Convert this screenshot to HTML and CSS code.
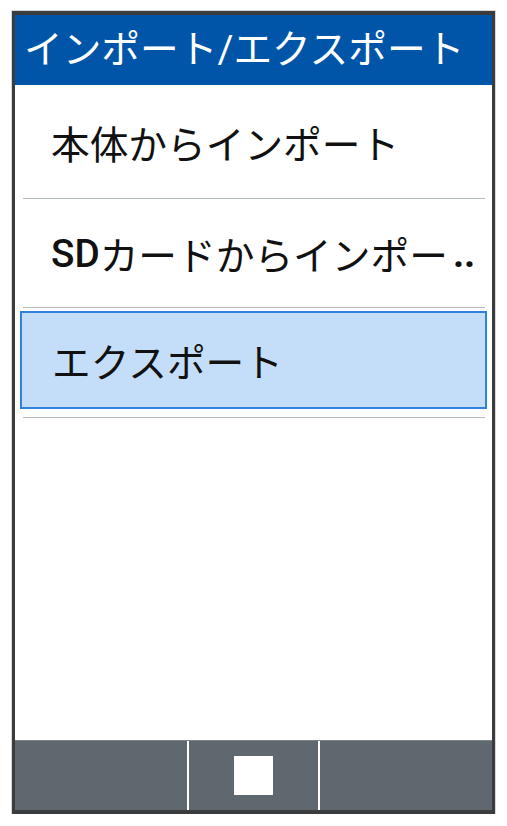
FILE: index.html
```html
<!DOCTYPE html>
<html lang="ja">
<head>
    <meta charset="UTF-8">
    <title>インポート/エクスポート</title>
    <link rel="stylesheet" href="styles.css">
</head>
<body>

<div class="screen">
    <div class="title-bar">インポート/エクスポート</div>

    <div class="menu">
        <div class="item first">本体からインポート</div>
        <div class="item"><span class="latin">SD</span>カードからインポー<span class="dots">..</span></div>
        <div class="item selected">
            <div class="highlight">エクスポート</div>
        </div>
    </div>

    <div class="softkeys">
        <div class="key"></div>
        <div class="key center"><span class="stop"></span></div>
        <div class="key"></div>
    </div>
</div>

</body>
</html>
```

FILE: styles.css
```css
body {
    margin: 0;
    padding: 11px 0 0 12px;
    background: #fff;
    font-family: Roboto, "Noto Sans CJK JP", sans-serif;
}
.screen {
    width: 477px;
    height: 795px;
    border: solid #3b3c3e;
    border-width: 4px 3px;
    display: flex;
    flex-direction: column;
    background: #fff;
    box-shadow: 0 0 0 1px #d8d8d8;
}
.title-bar {
    height: 70px;
    background: #0055a9;
    color: #fff;
    font-size: 38.7px;
    line-height: 70px;
    padding-left: 9px;
    white-space: nowrap;
    overflow: hidden;
}
.menu {
    flex: 1;
}
.item {
    height: 108px;
    margin: 0 7px 0 8px;
    padding-left: 28px;
    border-bottom: 1px solid #b5bcbc;
    font-size: 38.7px;
    color: #111;
    display: flex;
    align-items: center;
    white-space: nowrap;
}
.item.first {
    height: 113px;
}
.latin {
    font-weight: 500;
}
.dots {
    font-weight: bold;
    margin-left: 5px;
}
.item.selected {
    height: 106px;
    padding: 0;
    display: block;
}
.highlight {
    height: 94px;
    margin: 3px -2px 0 -3px;
    padding-left: 30px;
    background: #c4defa;
    border: 2px solid #3181df;
    display: flex;
    align-items: center;
}
.softkeys {
    height: 69px;
    background: #5f686e;
    border-top: 1px solid #7c8589;
    display: flex;
}
.key {
    width: 173px;
}
.key.center {
    width: 129px;
    border-left: 2px solid #fff;
    border-right: 2px solid #fff;
    display: flex;
    align-items: center;
    justify-content: center;
}
.stop {
    width: 39px;
    height: 39px;
    background: #fff;
}
```
